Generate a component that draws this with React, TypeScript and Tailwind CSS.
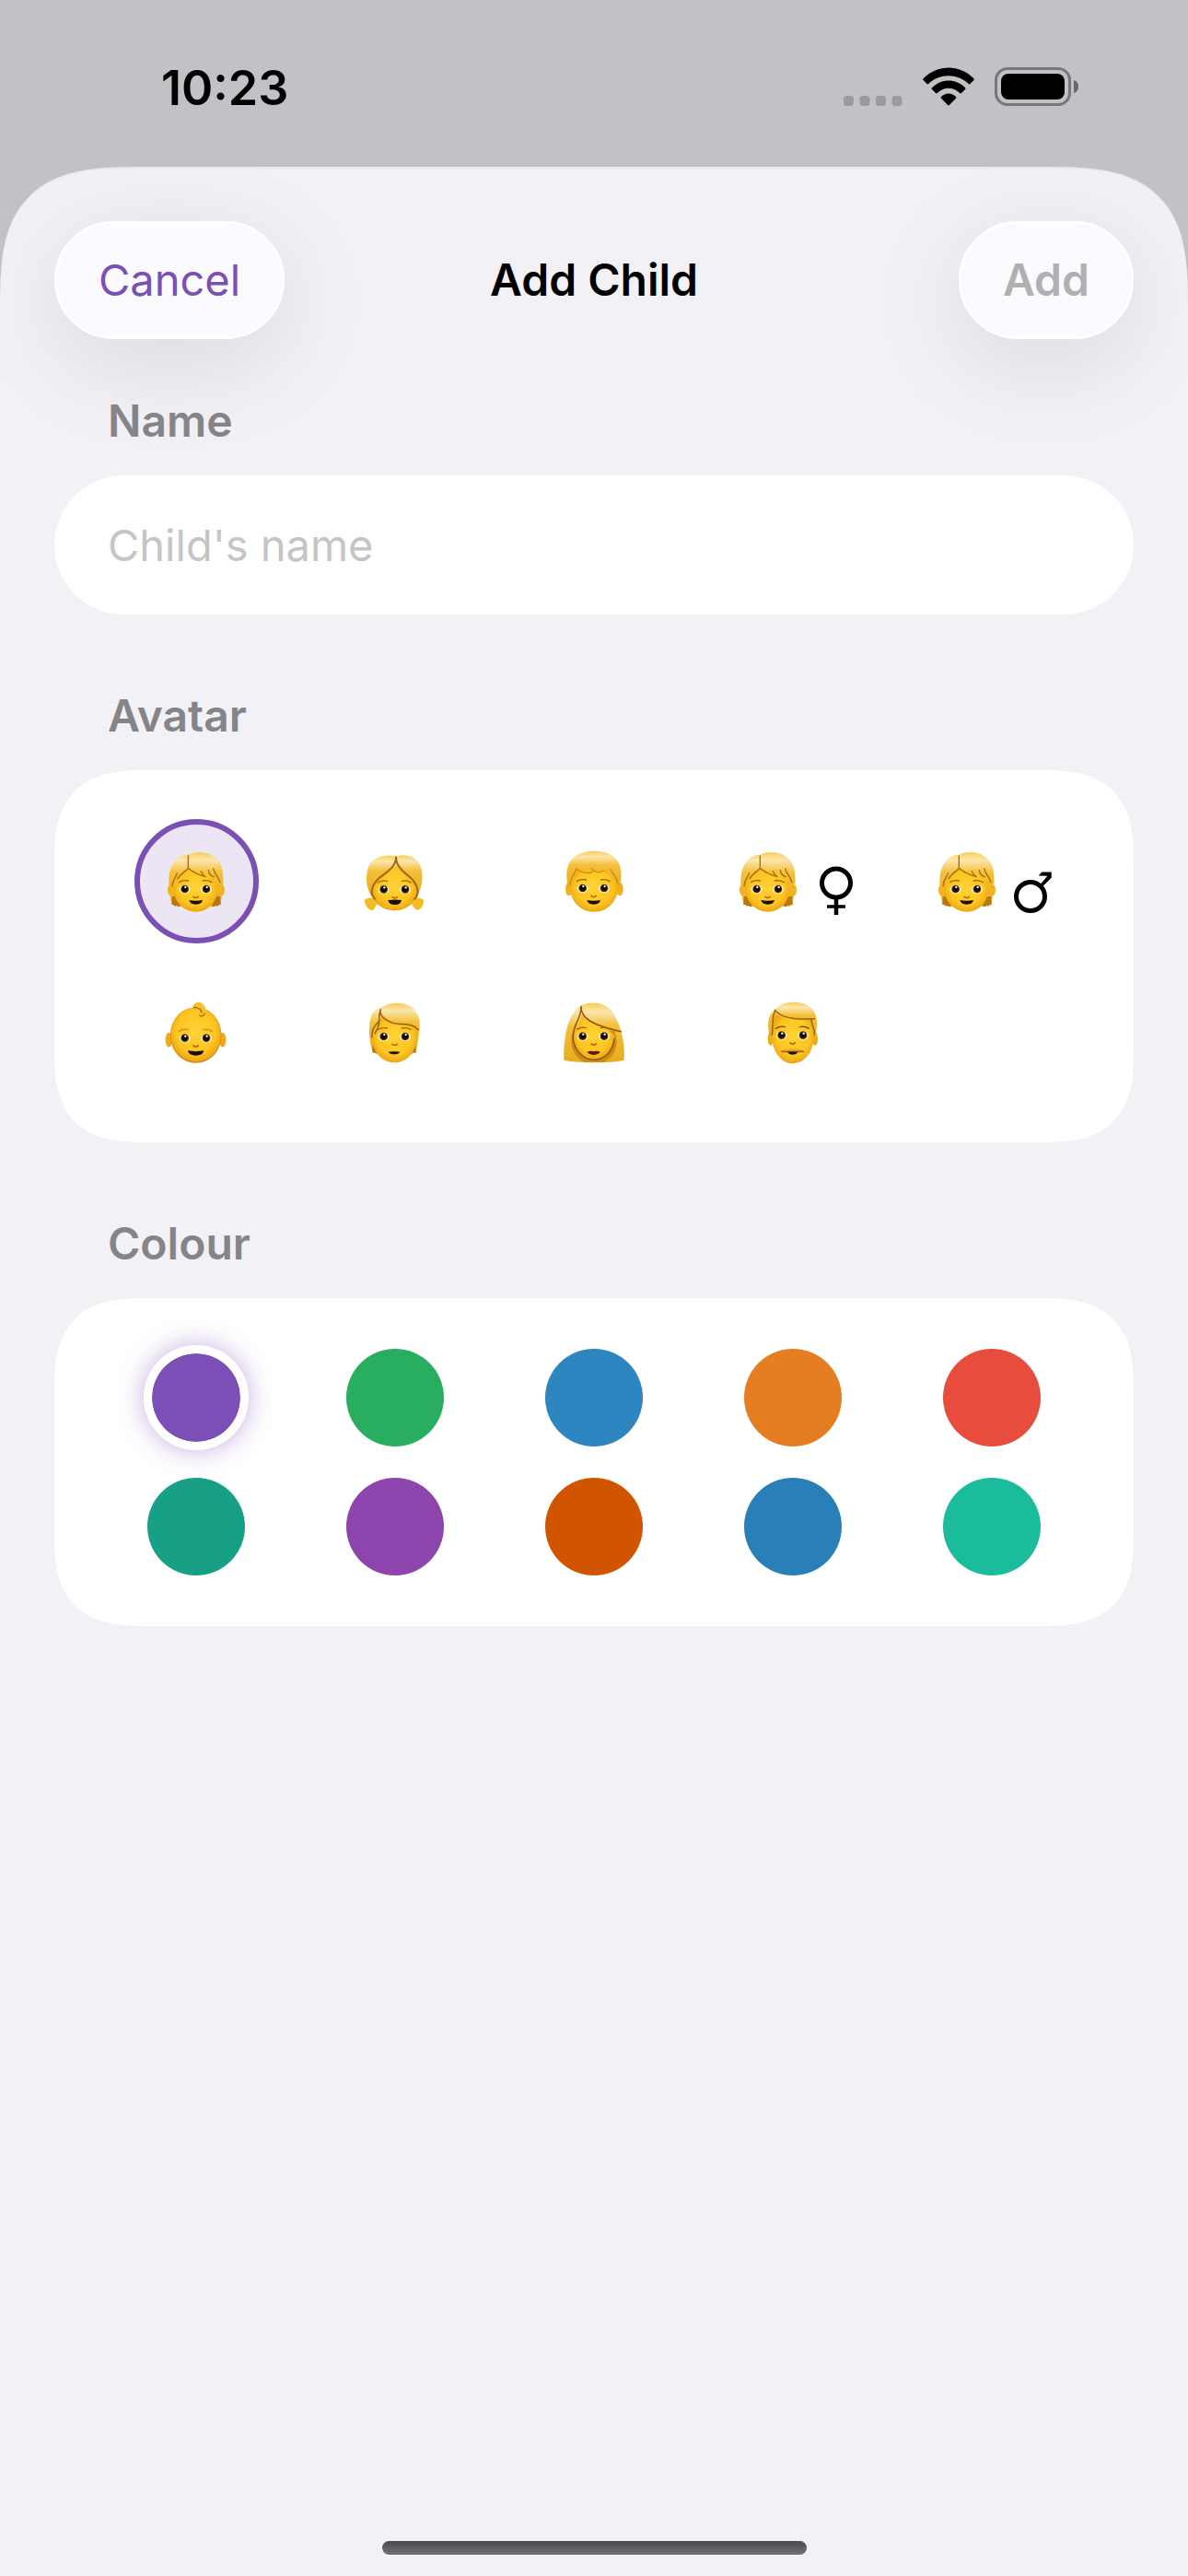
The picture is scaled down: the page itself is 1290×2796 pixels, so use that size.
import { useState } from "react";
import type { ReactNode } from "react";

type FeaturesProps = {
  eyeY: number;
  brow?: string;
  lips?: string;
  mouth?: string;
};

// Eyes, brows, nose and mouth shared by every avatar, on a 204 unit grid
function Features({ eyeY, brow = "#a8650a", lips = "#1a0f04", mouth = "M79 162q22 4 44 0q-3 14-22 14t-22-14z" }: FeaturesProps) {
  return (
    <g>
      {[65, 135].map((x) => (
        <g key={x}>
          <ellipse cx={x} cy={eyeY + 1} rx="18" ry="14" fill="#fff3cf" />
          <circle cx={x} cy={eyeY} r="13" fill="#5a3008" />
          <circle cx={x} cy={eyeY - 1} r="9.5" fill="#120a04" />
          <circle cx={x + 2} cy={eyeY - 6} r="3.5" fill="#fff" />
        </g>
      ))}
      <path d={`M46 ${eyeY - 22}q14-9 30-5M124 ${eyeY - 27}q16-4 30 5`} fill="none" stroke={brow} strokeWidth="4" strokeLinecap="round" />
      <path d={`M93 ${eyeY + 25}q8 7 16 0`} fill="none" stroke="#b8690a" strokeWidth="5" strokeLinecap="round" />
      <path d={mouth} fill={lips} />
    </g>
  );
}

function EmojiSvg({ label, children }: { label: string; children: ReactNode }) {
  return (
    <svg viewBox="0 0 204 204" className="size-[68px] shrink-0" role="img" aria-label={label}>
      {children}
    </svg>
  );
}

function Child() {
  return (
    <EmojiSvg label="Child">
      <path d="M22 176C18 150 10 120 14 84C18 44 42 14 76 14C96 2 138 2 160 20C186 36 192 70 190 104C190 134 184 154 182 178L150 182H50Z" fill="url(#hair)" />
      <path d="M24 150l-2 26 7 1 3 5 6-2 6 4 6-2V150zM180 150l2 26-7 1-3 5-6-2-6 4-6-2V150z" fill="#b9770f" />
      <ellipse cx="17" cy="130" rx="8" ry="17" fill="#f2b31e" />
      <ellipse cx="187" cy="130" rx="8" ry="17" fill="#f2b31e" />
      <path d="M28 116C34 86 56 68 76 58C106 70 156 72 172 112C178 156 148 200 102 200S24 158 28 116Z" fill="url(#skin)" />
      <path d="M76 18V58M76 58C66 70 54 74 42 92M76 58C94 74 110 80 132 86M118 68C122 78 126 82 132 86M142 64C144 78 150 84 160 86M158 60C162 76 172 82 180 104M40 74C36 90 26 92 24 116" fill="none" stroke="#a96a10" strokeWidth="4" strokeLinecap="round" />
      <Features eyeY={126} />
    </EmojiSvg>
  );
}

function Girl() {
  return (
    <EmojiSvg label="Girl">
      <path d="M40 158C28 152 10 154 2 162C4 178 14 194 28 196C36 190 42 178 46 166ZM158 158C170 152 188 154 196 162C194 178 188 192 174 195C164 190 156 178 152 166Z" fill="#f5bb25" />
      <path d="M24 148C8 122 4 82 16 52C28 24 66 10 105 20C140 8 170 22 182 46C196 74 192 118 174 148Z" fill="url(#hair)" />
      <path d="M27 130C38 92 84 86 105 50C122 86 164 92 173 130C176 162 146 196 101 196S24 164 27 130Z" fill="url(#skin)" />
      <path d="M105 22C104 76 34 76 26 132C26 144 30 152 36 158M105 22C106 76 168 76 176 132C176 144 172 152 166 158" fill="none" stroke="#a3660e" strokeWidth="6" strokeLinecap="round" />
      <Features eyeY={127} mouth="M79 162q22-3 44 0q-2 15-22 15t-22-15z" />
    </EmojiSvg>
  );
}

function Boy() {
  return (
    <EmojiSvg label="Boy">
      <ellipse cx="20" cy="126" rx="11" ry="22" fill="#f3b01c" />
      <ellipse cx="186" cy="126" rx="11" ry="22" fill="#f3b01c" />
      <path d="M18 120C8 80 12 44 36 22C66-4 138-4 168 22C192 46 196 80 184 122Z" fill="url(#hair)" />
      <path d="M24 116C26 88 40 74 44 58C80 72 122 62 148 64C158 78 178 88 180 116C182 160 150 200 102 200S22 160 24 116Z" fill="url(#skin)" />
      <path d="M44 58C40 76 26 84 24 112M48 62C60 74 82 76 98 70M94 58C106 72 120 74 134 66M156 62C164 76 176 86 180 110" fill="none" stroke="#c98813" strokeWidth="3.5" strokeLinecap="round" />
      <Features eyeY={123} />
    </EmojiSvg>
  );
}

function Baby() {
  return (
    <EmojiSvg label="Baby">
      <ellipse cx="13" cy="125" rx="11" ry="24" fill="#efa91a" />
      <ellipse cx="188" cy="125" rx="11" ry="24" fill="#efa91a" />
      <path d="M101 20C150 20 184 60 184 110C184 162 146 200 101 200S18 162 18 110C18 60 52 20 101 20Z" fill="#d5850f" />
      <path d="M101 20C150 20 182 60 182 108C182 160 144 196 101 196S20 160 20 108C20 60 52 20 101 20Z" fill="url(#skin)" />
      <path d="M91 20C92 6 106-2 118 4C132 12 138 30 130 42C124 50 112 48 112 42C124 40 120 20 108 18Z" fill="#f8c22a" />
      <path d="M92 20C110 16 124 30 118 38M112 44C118 50 128 48 131 38" fill="none" stroke="#ab680c" strokeWidth="4" />
      <Features eyeY={119} brow="#d09322" mouth="M75 160q26 5 52 0q-3 16-26 16t-26-16z" />
    </EmojiSvg>
  );
}

function Person() {
  return (
    <EmojiSvg label="Person">
      <path d="M30 168C18 130 14 90 22 56C26 34 40 24 54 22C78 0 134 0 158 20C182 40 186 72 180 104L170 168Z" fill="url(#hair)" />
      <path d="M30 136L28 164l8 2 5 4 8-3V136zM168 136l2 28-8 2-5 4-8-3V136z" fill="#b9770f" />
      <path d="M30 112C44 90 50 74 58 50C86 80 134 70 172 84C176 112 174 142 160 164C144 188 122 199 101 199S54 188 40 164C28 144 26 128 30 112Z" fill="url(#skin)" />
      <path d="M55 26C50 44 66 58 90 68C118 80 156 66 178 92M54 30C44 56 60 70 36 104M52 60C40 78 26 84 26 116" fill="none" stroke="#a4670f" strokeWidth="5" strokeLinecap="round" />
      <Features eyeY={114} mouth="M80 164q20-3 38 0q-6 8-19 8t-19-8z" />
    </EmojiSvg>
  );
}

function Woman() {
  return (
    <EmojiSvg label="Woman">
      <path d="M4 190C2 120 16 36 60 14C88-2 138 2 160 32C188 72 204 130 200 190C190 202 16 202 4 190Z" fill="url(#hair)" />
      <path d="M34 96C20 130 28 176 70 197H134C176 176 184 130 168 96Z" fill="#b87308" opacity="0.6" />
      <path d="M34 112C40 84 60 66 62 42C84 74 140 84 168 108C172 150 142 190 102 190S32 152 34 112Z" fill="url(#skin)" />
      <path d="M60 16C58 56 100 78 190 98M60 16C62 60 30 74 34 122C38 158 66 190 102 190S164 160 168 122" fill="none" stroke="#8f570b" strokeWidth="4.5" strokeLinecap="round" />
      <Features eyeY={113} lips="#5b1f08" mouth="M79 165q12-6 22-2q10-4 22 2q-10 10-22 10t-22-10z" />
    </EmojiSvg>
  );
}

function Man() {
  return (
    <EmojiSvg label="Man">
      <ellipse cx="29" cy="122" rx="9" ry="22" fill="#f0ab1a" />
      <ellipse cx="174" cy="122" rx="9" ry="22" fill="#f0ab1a" />
      <path d="M28 118C16 80 20 42 42 26C70-6 138-4 160 20C186 42 182 84 174 118Z" fill="url(#hair)" />
      <path d="M34 116C30 94 40 66 46 42C80 60 120 62 162 58C166 80 174 94 170 118C170 158 142 202 102 202S34 158 34 116Z" fill="url(#skin)" />
      <path d="M44 28C62 54 112 60 172 56M44 28C30 60 40 66 34 108M162 60C164 80 174 88 172 108" fill="none" stroke="#9d620e" strokeWidth="4.5" strokeLinecap="round" />
      <path d="M64 164C74 150 90 156 101 152C112 156 128 150 138 164Z" fill="#f0b02a" />
      <path d="M64 163H138" stroke="#a3640e" strokeWidth="5" />
      <Features eyeY={110} brow="#8f4d09" mouth="M84 164h34q-5 9-17 9t-17-9z" />
    </EmojiSvg>
  );
}

function FemaleSign() {
  return (
    <svg viewBox="0 0 54 68" className="h-[68px] w-[54px] shrink-0 overflow-visible" fill="none" stroke="#000" aria-hidden="true">
      <circle cx="40" cy="35.5" r="15.5" strokeWidth="5" />
      <path d="M40 52V70" strokeWidth="4.5" />
      <path d="M30 61H50" strokeWidth="3.5" />
    </svg>
  );
}

function MaleSign() {
  return (
    <svg viewBox="0 0 54 68" className="h-[68px] w-[54px] shrink-0 overflow-visible" aria-hidden="true">
      <circle cx="35" cy="50" r="15.5" strokeWidth="5" fill="none" stroke="#000" />
      <path d="M47.3 23.5H57.7V29.8L48.3 39L46 36.5L53.3 27.8L43.7 27.5Z" />
    </svg>
  );
}

const avatars = [
  { id: "child", icon: <Child /> },
  { id: "girl", icon: <Girl /> },
  { id: "boy", icon: <Boy /> },
  { id: "child female", icon: <><Child /><FemaleSign /></> },
  { id: "child male", icon: <><Child /><MaleSign /></> },
  { id: "baby", icon: <Baby /> },
  { id: "person", icon: <Person /> },
  { id: "woman", icon: <Woman /> },
  { id: "man", icon: <Man /> },
];

const colours = [
  { name: "Violet", bg: "bg-[#7b4fb5]" },
  { name: "Green", bg: "bg-[#29ae61]" },
  { name: "Blue", bg: "bg-[#2e86c0]" },
  { name: "Orange", bg: "bg-[#e57e23]" },
  { name: "Red", bg: "bg-[#e74c3c]" },
  { name: "Teal", bg: "bg-[#17a086]" },
  { name: "Purple", bg: "bg-[#8d44ac]" },
  { name: "Burnt orange", bg: "bg-[#d15400]" },
  { name: "Ocean", bg: "bg-[#2980b8]" },
  { name: "Mint", bg: "bg-[#1bbc9b]" },
];

function StatusBar() {
  return (
    <div className="flex items-center justify-between pt-[66px] pr-[119px] pb-[55px] pl-[175px]">
      <span className="text-[52px] leading-[60px] font-semibold">10:23</span>
      <div className="flex items-end pb-1">
        <svg viewBox="0 0 64 11" className="mr-[22px] h-[11px] w-[64px]" fill="#9b9b9e" aria-hidden="true">
          <rect x="0" width="11" height="11" rx="3.5" />
          <rect x="17.5" width="11" height="11" rx="3.5" />
          <rect x="35" width="11" height="11" rx="3.5" />
          <rect x="52.5" width="11" height="11" rx="3.5" />
        </svg>
        <svg viewBox="0 0 56 42" className="mr-[22px] h-[42px] w-[56px]" aria-hidden="true">
          <path d="M.6 12.2C16-3.4 40-3.4 55.4 12.2q.9.9 0 1.8L51.5 18q-.8.8-1.7 0C38 6.2 18 6.2 6.2 18q-.9.8-1.7 0L.6 14q-.9-.9 0-1.8Z" />
          <path d="M10 22.2C20 12 36 12 46 22.2q.9.9 0 1.8L42 28q-.8.8-1.8 0C33 21 23 21 15.8 28q-1 .8-1.8 0L10 24q-.9-.9 0-1.8Z" />
          <path d="M20 32C24.5 27.2 31.5 27.2 36 32q.9.9 0 1.8L28.9 41q-.9.8-1.8 0L20 33.8q-.9-.9 0-1.8Z" />
        </svg>
        <svg viewBox="0 0 91 42" className="h-[42px] w-[91px]" aria-hidden="true">
          <rect x="1.5" y="1.5" width="80" height="39" rx="12.5" fill="none" stroke="#78787b" strokeWidth="3" />
          <rect x="7" y="7" width="69" height="28" rx="8" />
          <path d="M86 14C89.5 15 91 18 91 21S89.5 27 86 28Z" fill="#68686b" />
        </svg>
      </div>
    </div>
  );
}

export default function App() {
  const [name, setName] = useState("");
  const [avatar, setAvatar] = useState("child");
  const [colour, setColour] = useState("Violet");

  return (
    <div className="flex min-h-screen flex-col bg-[#c2c1c6] font-['Inter','Liberation_Sans',sans-serif] text-black">
      <svg className="absolute size-0" aria-hidden="true">
        <defs>
          <radialGradient id="skin" cx="0.5" cy="0.45" r="0.6">
            <stop offset="0" stopColor="#ffd335" />
            <stop offset="0.65" stopColor="#fcc521" />
            <stop offset="1" stopColor="#e79c10" />
          </radialGradient>
          <linearGradient id="hair" x1="0" y1="0" x2="0" y2="1">
            <stop offset="0" stopColor="#f7cf52" />
            <stop offset="0.15" stopColor="#fbe6ae" />
            <stop offset="0.38" stopColor="#f3c03a" />
            <stop offset="1" stopColor="#e8ab1f" />
          </linearGradient>
        </defs>
      </svg>

      <StatusBar />

      <main className="flex flex-1 flex-col overflow-hidden rounded-t-[155px] border-t-2 border-[#e9e8ed] bg-[#f2f1f6] [corner-shape:superellipse(1.59)]">
        <header className="grid grid-cols-[1fr_auto_1fr] items-center px-[59px] pt-[57px] text-[48px] leading-[60px]">
          <button type="button" className="justify-self-start rounded-full border-3 border-white bg-[#fafaff] px-[45px] py-[31px] text-[47px] text-[#7b4fb5] shadow-[0_24px_110px_rgba(0,0,0,0.1)]">
            Cancel
          </button>
          <h1 className="font-semibold">Add Child</h1>
          <button type="button" disabled={!name} className="justify-self-end rounded-full border-3 border-white bg-[#fafaff] px-[45px] py-[31px] font-semibold text-[#7b4fb5] shadow-[0_24px_110px_rgba(0,0,0,0.1)] disabled:text-[#b0b0b2]">
            Add
          </button>
        </header>

        <form className="mt-[59px] flex flex-col gap-[80px] px-[59px] text-[48px] leading-[60px]">
          <div className="flex flex-col gap-[29px]">
            <label htmlFor="name" className="px-[58px] font-semibold text-[#858489]">Name</label>
            <input
              id="name"
              value={name}
              onChange={(e) => setName(e.target.value)}
              placeholder="Child's name"
              className="h-[151px] w-full rounded-full bg-white px-[58px] text-[47px] outline-none placeholder:text-[#c5c5c7]"
            />
          </div>

          <fieldset>
            <legend className="mb-[29px] px-[58px] font-semibold text-[#858489]">Avatar</legend>
            <div className="grid grid-cols-5 gap-x-[24px] gap-y-[29px] rounded-[100px] bg-white px-[58px] pt-[53px] pb-[52px] [corner-shape:superellipse(1.45)]">
              {avatars.map(({ id, icon }) => (
                <label key={id} className="flex justify-center">
                  <input type="radio" name="avatar" aria-label={id} checked={avatar === id} onChange={() => setAvatar(id)} className="peer sr-only" />
                  <span className="flex size-[135px] items-center justify-center rounded-full border-6 border-transparent peer-checked:border-[#7b4fb5] peer-checked:bg-[#ebe5f4]">
                    {icon}
                  </span>
                </label>
              ))}
            </div>
          </fieldset>

          <fieldset>
            <legend className="mb-[29px] px-[58px] font-semibold text-[#858489]">Colour</legend>
            <div className="grid grid-cols-5 gap-x-[24px] gap-y-[34px] rounded-[100px] bg-white px-[58px] py-[55px] [corner-shape:superellipse(1.45)]">
              {colours.map(({ name: label, bg }) => (
                <label key={label} className="flex size-[106px] items-center justify-center justify-self-center">
                  <input type="radio" name="colour" aria-label={label} checked={colour === label} onChange={() => setColour(label)} className="peer sr-only" />
                  <span className={`size-[106px] shrink-0 rounded-full bg-clip-padding peer-checked:size-[114px] peer-checked:border-9 peer-checked:border-white peer-checked:shadow-[0_0_28px_rgba(123,79,181,0.45)] ${bg}`} />
                </label>
              ))}
            </div>
          </fieldset>
        </form>

        <div className="mx-auto mt-auto mb-[23px] h-[15px] w-[461px] rounded-full bg-linear-to-b from-[#4a4a4c] to-[#747476] shadow-[0_1px_0_#fff]" />
      </main>
    </div>
  );
}
